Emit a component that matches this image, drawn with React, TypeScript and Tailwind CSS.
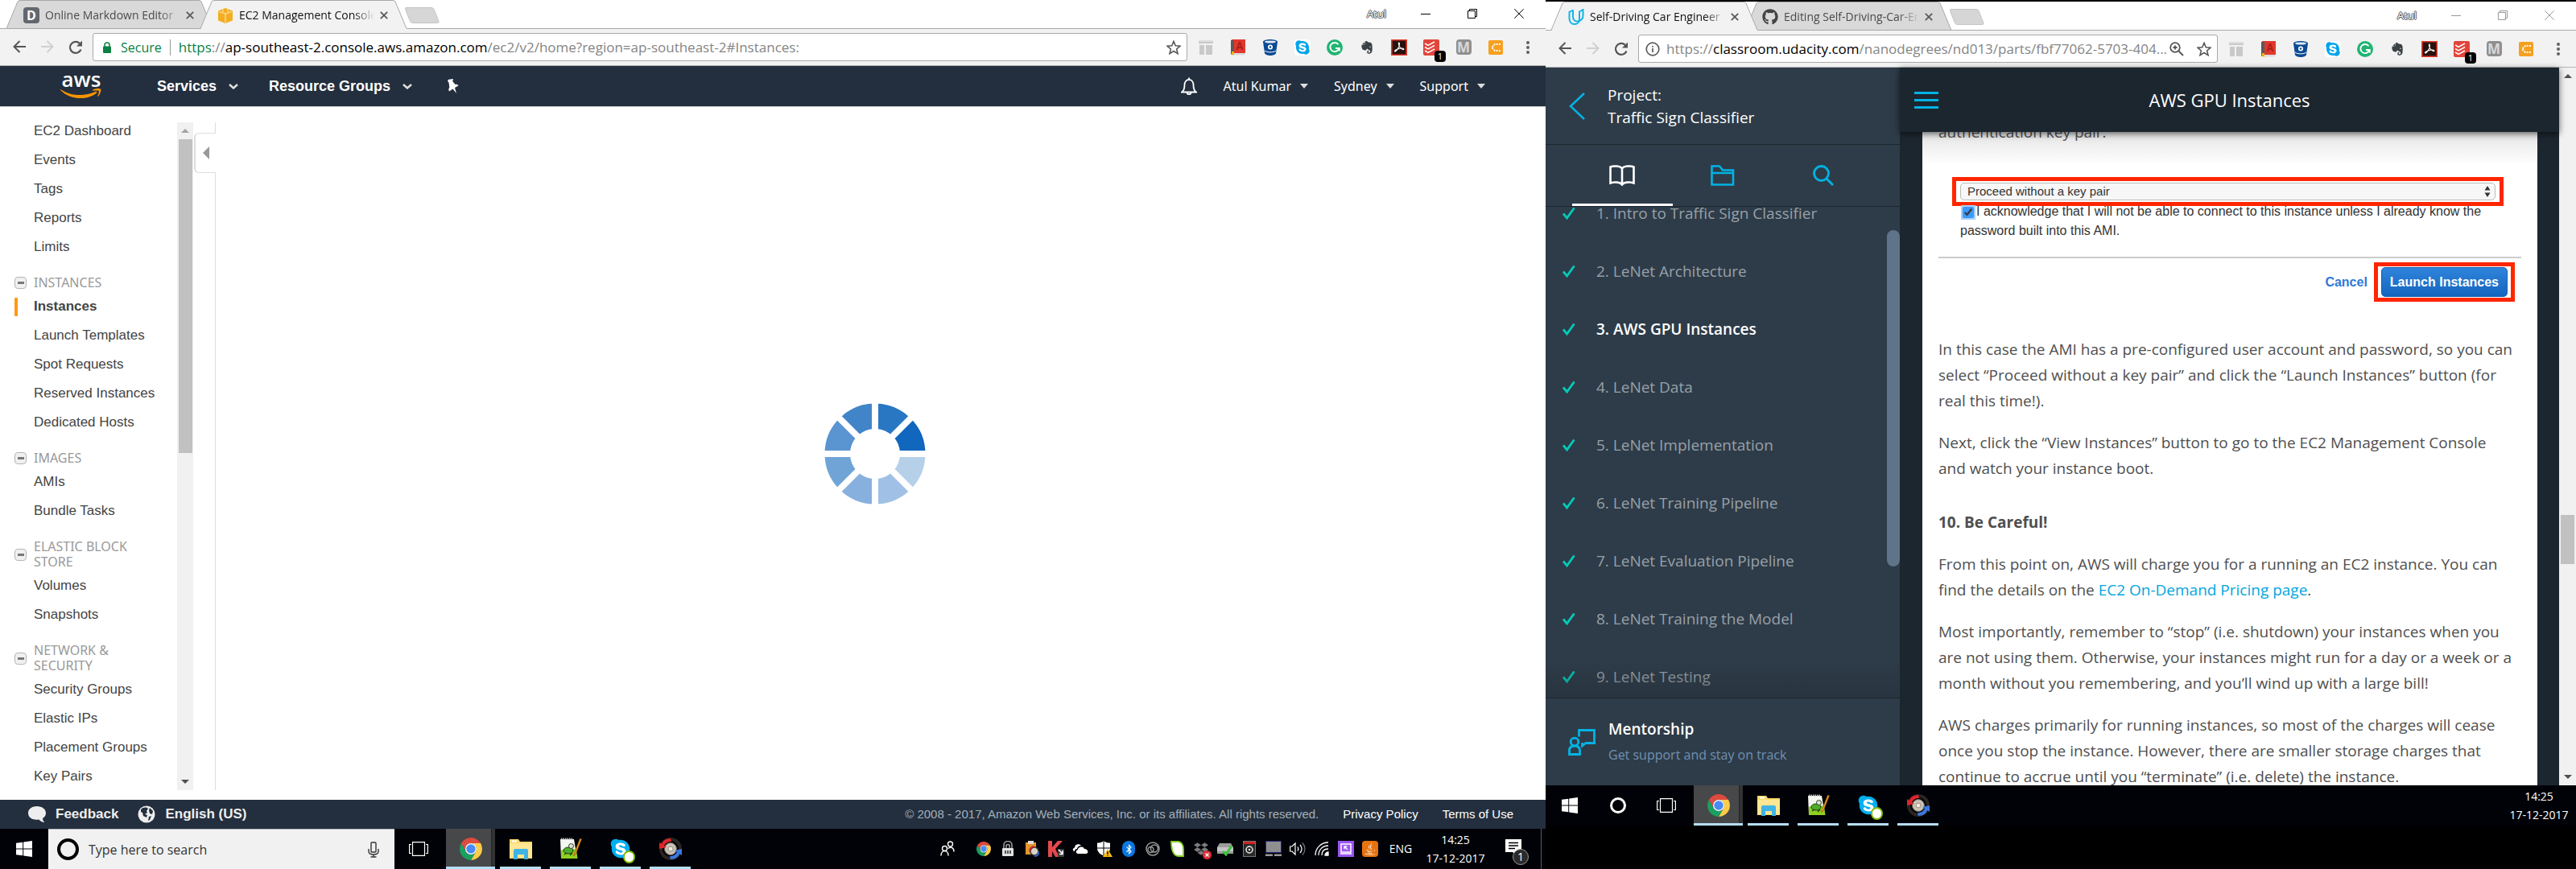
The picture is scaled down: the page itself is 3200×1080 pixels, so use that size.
import React from "react";
import { FaGithub, FaEvernote, FaJava, FaDropbox, FaBluetoothB, FaSkype } from "react-icons/fa";

const UI = "font-['Open_Sans',sans-serif]";
const ARIAL = "font-['Liberation_Sans',sans-serif]";

/* ---------- shared icons ---------- */

function ChromeLogo({ className }: { className: string }) {
  const arm = "M1.61 6A12 12 0 0 1 22.39 6H12A6 6 0 0 0 6.8 15Z";
  return (
    <svg viewBox="0 0 24 24" className={className} aria-hidden="true">
      <path d={arm} fill="#dd4b3e" />
      <path d={arm} fill="#fdcd48" transform="rotate(120 12 12)" />
      <path d={arm} fill="#1aa05f" transform="rotate(240 12 12)" />
      <circle cx="12" cy="12" r="6" fill="#fff" />
      <circle cx="12" cy="12" r="4.9" fill="#4a8af4" />
    </svg>
  );
}

function WindowsLogo() {
  return (
    <svg viewBox="0 0 20 20" className="size-5" fill="#fff" aria-hidden="true">
      <path d="M0 2.8 8.2 1.7V9.5H0ZM9.2 1.5 20 0V9.5H9.2ZM0 10.5H8.2V18.3L0 17.2ZM9.2 10.5H20V20L9.2 18.5Z" />
    </svg>
  );
}

function TaskViewIcon() {
  return (
    <svg viewBox="0 0 24 18" className="h-[18px] w-6" fill="none" stroke="#fff" strokeWidth="1.2" aria-hidden="true">
      <path d="M4.5.6h15v16.8h-15zM3 3.5H.6v11H3M21 3.5h2.4v11H21" />
    </svg>
  );
}

function ExplorerIcon({ className = "size-7" }: { className?: string }) {
  return (
    <svg viewBox="0 0 28 28" className={className} aria-hidden="true">
      <path d="M0 2h11l2 3h15v21H0Z" fill="#fbd968" />
      <path d="M0 7h28v18H0Z" fill="#ffe694" />
      <path d="M3 3.5h6v2H3Z" fill="#fff" />
      <path d="M5 16a2 2 0 0 1 2-2h14a2 2 0 0 1 2 2v11h-5v-6h-8v6H5Z" fill="#3eb3e6" />
    </svg>
  );
}

function NotepadIcon() {
  return (
    <svg viewBox="0 0 28 28" className="size-7" aria-hidden="true">
      <path d="M1 2h17l4 24H2Z" fill="#f4f6f0" />
      <path d="M2 16c6-3 12-3 19-1l1.500 11H2Z" fill="#8fd021" />
      <path d="M2 1.500h15" stroke="#bbb" strokeWidth="2" strokeDasharray="1.500 1" />
      <ellipse cx="11" cy="16" rx="6" ry="4" fill="#4fae2c" stroke="#1d3b12" />
      <circle cx="14.500" cy="10.500" r="3" fill="#d7e8c4" stroke="#333" />
      <path d="m6 21 3-2m4 3 3-3" stroke="#1d3b12" strokeWidth="1.500" />
      <path d="m18 20 7.500-19 2 1L20 21l-2.500 2Z" fill="#e8961e" stroke="#7a4a10" strokeWidth=".5" />
    </svg>
  );
}

function SkypeTask() {
  return (
    <span className="relative block size-7">
      <span className="absolute inset-1 rounded-full bg-white" />
      <FaSkype className="relative size-7 text-[#00aff0]" />
      <span className="absolute -bottom-1 -right-1 h-4 w-[15px] rounded-full border-2 border-[#7fba00] bg-white" />
    </span>
  );
}

function GearArrows() {
  return (
    <svg viewBox="0 0 28 28" className="size-7" aria-hidden="true">
      <circle cx="14" cy="14" r="12" fill="none" stroke="#2a2522" strokeWidth="4" />
      <circle cx="14" cy="14" r="7.500" fill="#c9c2b4" stroke="#6c665c" />
      <circle cx="14" cy="14" r="3" fill="#f0ebdf" stroke="#9a9283" />
      <path d="M14 1C8 1 4 4 3 8L0 6v8l9-2-3-2c2-3 4-5 9-5Z" fill="#e0242b" />
      <path d="M14 27c6 0 10-3 11-7l3 2v-8l-9 2 3 2c-2 3-4 5-9 5Z" fill="#3b78e0" />
    </svg>
  );
}

/* ---------- browser frame ---------- */

const CloseX = () => (
  <svg viewBox="0 0 10 10" className="size-[10px]" stroke="#5a5a5a" strokeWidth="1.800" aria-hidden="true">
    <path d="m.8.8 8.400 8.400M9.200.8.800 9.200" />
  </svg>
);

function Tab({ active, icon, title, first }: { active?: boolean; icon: React.ReactNode; title: string; first?: boolean }) {
  return (
    <div className={`relative h-9 w-[257px] shrink-0 ${first ? "" : "-ml-4"} ${active ? "z-10" : ""}`}>
      <svg viewBox="0 0 257 36" preserveAspectRatio="none" className="absolute inset-0 size-full" aria-hidden="true">
        <path d="M0 35.500 14 2q1-1.500 3-1.500H239q2 0 3 1.500l14 33.500" fill={active ? "#f2f2f2" : "#d9d9d9"} stroke="#a8a8a8" />
        <path d="M1 35.500H256" stroke={active ? "#f2f2f2" : "#a8a8a8"} />
      </svg>
      <div className="relative flex h-full items-center pl-[21px] pt-[2px]">
        <button className="flex min-w-0 items-center gap-[7px]">
          <span className="flex size-5 shrink-0 items-center justify-center">{icon}</span>
          <span
            className={`w-[168px] overflow-hidden whitespace-nowrap text-left text-sm [mask-image:linear-gradient(to_right,#000_85%,transparent)] ${active ? "text-[#111]" : "text-[#4a4a4a]"}`}
          >
            {title}
          </span>
        </button>
        <button aria-label="Close tab" className="ml-[7px]">
          <CloseX />
        </button>
      </div>
    </div>
  );
}

function WindowControls({ faded }: { faded?: boolean }) {
  return (
    <div className={`ml-auto flex h-[34px] items-center pr-1 ${faded ? "text-[#999]" : "text-black"}`}>
      <button className="mr-5 text-[13px] leading-4 text-white [text-shadow:1px_0_0_#555,-1px_0_0_#555,0_1px_0_#555,0_-1px_0_#555]">Atul</button>
      <button aria-label="Minimize" className="flex w-[58px] justify-center">
        <span className="h-px w-3 bg-current" />
      </button>
      <button aria-label="Restore" className="flex w-[58px] justify-center">
        <svg viewBox="0 0 12 12" className="size-3" fill="none" stroke="currentColor">
          <path d="M.5 2.500h9v9h-9zM2.500 2.500v-2h9v9h-2" />
        </svg>
      </button>
      <button aria-label="Close" className="flex w-[58px] justify-center">
        <svg viewBox="0 0 12 12" className="size-3" stroke="currentColor">
          <path d="m.3.3 11.400 11.400M11.700.3.3 11.700" />
        </svg>
      </button>
    </div>
  );
}

function Extensions() {
  const items: [string, React.ReactNode][] = [
    [
      "Page layout",
      <svg viewBox="0 0 18 18" className="size-[18px]" fill="#c9c9c9">
        <path d="M0 0h18v4H0zM1 6h6v12H1zM9 6h8v12H9z" />
        <path d="M0 0h18v2H0z" fill="#dedede" />
      </svg>,
    ],
    [
      "Dictionary",
      <svg viewBox="0 0 18 20" className="h-5 w-[18px]">
        <path d="M1 0h17v17H4l-3 2Z" fill="#e2372c" />
        <path d="M0 1h4v18H1l-1-1Z" fill="#5a5a5a" />
        <path d="M3 17h14v2.500H3Z" fill="#dcdcdc" />
        <path d="m7.500 13 3-9h1l3 9M8.500 10h5" stroke="#a8211a" strokeWidth="1.800" fill="none" />
        <path d="M1 15h3v5l-1.500-1.500L1 20Z" fill="#f3b516" />
      </svg>,
    ],
    [
      "Bitbucket",
      <svg viewBox="0 0 18 20" className="h-5 w-[18px]">
        <path d="M0 3c0-4 18-4 18 0l-2 14c-1 4-13 4-14 0Z" fill="#0b4a94" />
        <ellipse cx="9" cy="3" rx="7" ry="1.600" fill="#dfe9f5" />
        <circle cx="9" cy="9.500" r="3" fill="#fff" />
        <circle cx="9" cy="9.500" r="1.300" fill="#0b4a94" />
        <path d="M2 14c3 2.500 11 2.500 14 0" stroke="#fff" fill="none" />
      </svg>,
    ],
    ["Skype", <FaSkype className="size-5 rounded bg-white text-[#00a4ea]" />],
    [
      "Grammarly",
      <svg viewBox="0 0 20 20" className="size-5">
        <circle cx="10" cy="10" r="10" fill="#1fb573" />
        <path d="M14.500 6.200A5.600 5.600 0 1 0 15.400 11H11M12.800 11h3v3.500" stroke="#fff" strokeWidth="1.900" fill="none" />
      </svg>,
    ],
    ["Evernote", <FaEvernote className="size-[18px] text-[#3b4245]" />],
    [
      "Acrobat",
      <svg viewBox="0 0 20 20" className="size-5">
        <path d="M.8.8h18.400v18.400H.8z" fill="#27120f" stroke="#e8392b" strokeWidth="1.600" />
        <path d="M9.500 4c2 0 .5 5-1 7.500S4.500 16 4.500 14.500s6-3.500 9-3.500 3 2 1 1.500-5-4-5-6.500c0-1 0-2 0-2Z" fill="none" stroke="#f5f5f5" strokeWidth="1.200" />
      </svg>,
    ],
    [
      "Todoist",
      <span className="relative block">
        <svg viewBox="0 0 20 20" className="size-5">
          <rect width="20" height="20" rx="2" fill="#e2453c" />
          <path d="m2 5 4 2.500L14 3M2 9.500 6 12l8-4.500M2 14l4 2.500 8-4.500" stroke="#fff" strokeWidth="1.500" fill="none" />
        </svg>
        <span className="absolute -bottom-2 -right-2 flex h-[14px] w-[14px] items-center justify-center rounded-sm bg-black text-[11px] leading-none text-white">1</span>
      </span>,
    ],
    [
      "Mendeley",
      <span className="flex size-[19px] items-center justify-center rounded-sm bg-[#8f8f8f] text-[17px] font-bold leading-none text-[#d9d9d9]">M</span>,
    ],
    [
      "Cloud",
      <svg viewBox="0 0 18 18" className="size-[18px]">
        <rect width="18" height="18" rx="2" fill="#f7a01f" />
        <path d="M15 5H8L4 9l4 4h7" stroke="#fff" strokeWidth="2" strokeDasharray="2 1.300" fill="none" />
      </svg>,
    ],
  ];
  return (
    <div className="ml-[3px] flex shrink-0 items-center pr-[2px]">
      {items.map(([label, icon]) => (
        <button key={label} aria-label={label} className="flex w-10 justify-center">
          {icon}
        </button>
      ))}
      <button aria-label="Menu" className="flex w-10 justify-center">
        <svg viewBox="0 0 4 20" className="h-5 w-1" fill="#5f6062">
          <circle cx="2" cy="4" r="2" />
          <circle cx="2" cy="10" r="2" />
          <circle cx="2" cy="16" r="2" />
        </svg>
      </button>
    </div>
  );
}

function Toolbar({ children }: { children: React.ReactNode }) {
  return (
    <div className="flex h-[46px] shrink-0 items-center border-b border-[#b6b6b6] bg-[#f2f2f2]">
      <div className="flex shrink-0 pl-[6px]">
        <button aria-label="Back" className="flex w-[35px] justify-center">
          <svg viewBox="0 0 16 16" className="size-4" fill="none" stroke="#555" strokeWidth="2">
            <path d="M16 8H1.500M8.500 1 1.500 8l7 7" />
          </svg>
        </button>
        <button aria-label="Forward" className="flex w-[35px] justify-center">
          <svg viewBox="0 0 16 16" className="size-4" fill="none" stroke="#d0d0d0" strokeWidth="2">
            <path d="M0 8h14.500M7.500 1l7 7-7 7" />
          </svg>
        </button>
        <button aria-label="Reload" className="flex w-[35px] justify-center">
          <svg viewBox="0 0 18 18" className="size-[18px]" fill="none" stroke="#555" strokeWidth="2.200">
            <path d="M15.500 11.500A7 7 0 1 1 14 4" />
            <path d="M17 .5v7h-7Z" fill="#555" stroke="none" />
          </svg>
        </button>
      </div>
      <div className="ml-1 flex h-[35px] min-w-0 flex-1 items-center rounded-[3px] border border-[#a9a9a9] bg-white">{children}</div>
      <Extensions />
    </div>
  );
}

function Star() {
  return (
    <button aria-label="Bookmark" className="mr-[7px] shrink-0">
      <svg viewBox="0 0 20 20" className="size-[18px]" fill="none" stroke="#555" strokeWidth="1.700">
        <path d="m10 1.500 2.500 6 6.500.5-5 4.200 1.600 6.300L10 15l-5.600 3.500L6 12.200 1 8l6.500-.5Z" />
      </svg>
    </button>
  );
}

function NewTab() {
  return (
    <button aria-label="New tab" className="-ml-[3px] mt-[9px] h-5">
      <svg viewBox="0 0 43 20" className="h-5 w-[43px]">
        <path d="M2 .5h31q2 0 3 2l6 15q.5 2-1.500 2h-31q-2 0-3-2l-6-15Q0 .5 2 .5Z" fill="#d6d6d6" stroke="#c4c4c4" />
      </svg>
    </button>
  );
}

/* ---------- taskbar ---------- */

const taskCell = "flex h-full w-[51px] items-center justify-center border-b-[3px] border-[#b5dffa] pt-[3px]";

function TaskApps() {
  return (
    <div className="flex h-full shrink-0 items-stretch">
      <button aria-label="Task view" className="flex w-[60px] items-center justify-center">
        <TaskViewIcon />
      </button>
      <div className="ml-1 flex gap-[11px]">
        <button aria-label="Chrome" className="-mr-[5px] flex w-[61px] items-center justify-center border-b-[3px] border-[#b5dffa] bg-[linear-gradient(to_right,#47484a_56px,#222_56px,#333_58px)] pt-[3px]">
          <ChromeLogo className="size-7" />
        </button>
        <button aria-label="File Explorer" className={taskCell}>
          <ExplorerIcon />
        </button>
        <button aria-label="Notepad++" className={taskCell}>
          <NotepadIcon />
        </button>
        <button aria-label="Skype" className={taskCell}>
          <SkypeTask />
        </button>
        <button aria-label="Sync" className={taskCell}>
          <GearArrows />
        </button>
      </div>
    </div>
  );
}

function Clock() {
  return (
    <div className="flex w-[90px] flex-col items-center text-sm leading-[23px] text-white">
      <span>14:25</span>
      <span>17-12-2017</span>
    </div>
  );
}

function Tray() {
  const items: [string, React.ReactNode][] = [
    ["Chrome", <ChromeLogo className="size-[18px]" />],
    [
      "Hotspot",
      <svg viewBox="0 0 16 20" className="h-5 w-4">
        <path d="M3 9V5c0-6 10-6 10 0v4M6 9V6c0-2 4-2 4 0v3" fill="none" stroke="#9a9a9a" strokeWidth="1.600" />
        <rect x="1" y="9" width="14" height="10" rx="1" fill="#e3e3e3" />
        <path d="M4 12h2v4H4zM7 12h2v4H7zM10 12h2v4h-2z" fill="#555" />
      </svg>,
    ],
    [
      "Clipboard",
      <svg viewBox="0 0 18 20" className="h-5 w-[18px]">
        <path d="M1 2h13v15H1z" fill="#e2962e" />
        <path d="M4 0h7v4H4z" fill="#ddd" />
        <circle cx="12" cy="13" r="5" fill="#d8d2c8" stroke="#333" strokeWidth="1.500" />
        <path d="M6 13c0-4 3-6 6-6" stroke="#d22" strokeWidth="2" fill="none" />
        <path d="M18 13c0 4-3 6-6 6" stroke="#36c" strokeWidth="2" fill="none" />
      </svg>,
    ],
    [
      "Antivirus",
      <svg viewBox="0 0 20 20" className="size-5">
        <path d="M0 0h5v8l7-8h6L9 10l5 10H9l-4-7v7H0Z" fill="#e5484c" />
        <path d="M12 10h8v10h-8z" fill="#3d3d3d" />
        <path d="m13 11 5 5m0-4v4.500h-4" stroke="#fff" strokeWidth="1.500" fill="none" />
      </svg>,
    ],
    [
      "OneDrive",
      <svg viewBox="0 0 20 14" className="h-[14px] w-5" fill="#fff">
        <path d="M3 10C0 10 0 6 3 5.500 3 1 9 0 11 3c-3 0-5 2-5 4-2 0-3 1-3 3Z" />
        <path d="M8 13c-4 0-4-4-1-5 0-4 7-5 8-1 5 0 6 6 2 6Z" />
      </svg>,
    ],
    [
      "Defender",
      <svg viewBox="0 0 20 20" className="size-5">
        <path d="M9 0c2 2 5 2.500 8 2.500V9c0 5-4 8-8 9.500C5 17 1 14 1 9V2.500C4 2.500 7 2 9 0Z" fill="#fff" />
        <path d="M9 0v18M1 9h16" stroke="#000" />
        <path d="m14 10 6 10H8Z" fill="#fbbc14" />
        <path d="M14 13v4m0 1v1" stroke="#000" strokeWidth="1.300" />
      </svg>,
    ],
    [
      "Bluetooth",
      <span className="flex h-5 w-4 items-center justify-center rounded-full bg-[#0a78e0]">
        <FaBluetoothB className="size-[13px] text-white" />
      </span>,
    ],
    [
      "Creative Cloud",
      <svg viewBox="0 0 18 18" className="size-[18px]" fill="none" stroke="#9d9d9d" strokeWidth="1.400">
        <circle cx="9" cy="9" r="8" />
        <circle cx="6.500" cy="10" r="3.500" />
        <circle cx="11" cy="8.500" r="4.500" />
      </svg>,
    ],
    [
      "Evernote helper",
      <svg viewBox="0 0 18 20" className="h-5 w-[18px]">
        <path d="M2 1h9c5 1 6 6 6 10v8h-6C5 19 2 12 2 1Z" fill="#fff" stroke="#7fd023" strokeWidth="1.800" />
      </svg>,
    ],
    [
      "Dropbox",
      <span className="relative block">
        <FaDropbox className="size-[18px] text-[#7b7b7b]" />
        <svg viewBox="0 0 11 11" className="absolute -bottom-1 -right-1 size-[11px]">
          <circle cx="5.500" cy="5.500" r="5.500" fill="#dd2f3a" />
          <path d="m3.500 3.500 4 4m0-4-4 4" stroke="#fff" strokeWidth="1.300" />
        </svg>
      </span>,
    ],
    [
      "Safely remove",
      <svg viewBox="0 0 20 18" className="h-[18px] w-5">
        <path d="M3 2h14l3 5v8H0V7Z" fill="#9c9c9c" />
        <path d="M0 7h20v5H0Z" fill="#c4c4c4" />
        <path d="m7 12 4 4 7-11" stroke="#3cc23c" strokeWidth="3" fill="none" />
      </svg>,
    ],
    [
      "Disk",
      <svg viewBox="0 0 16 20" className="h-5 w-4">
        <rect x=".5" y=".5" width="15" height="19" fill="#2a2a2a" stroke="#777" />
        <path d="M1 1h14v3H1z" fill="#c22" />
        <circle cx="8" cy="11" r="4" fill="none" stroke="#eee" strokeWidth="1.500" />
        <circle cx="8" cy="11" r="1.200" fill="#eee" />
      </svg>,
    ],
    [
      "Touchpad",
      <svg viewBox="0 0 20 20" className="size-5">
        <rect x=".5" y=".5" width="19" height="14" fill="#8f8f8f" stroke="#26277a" />
        <path d="M0 16.500h9V19H0zM11 16.500h9V19h-9z" fill="#9a9a9a" />
      </svg>,
    ],
    [
      "Volume",
      <svg viewBox="0 0 20 18" className="h-[18px] w-5" fill="none" stroke="#fff" strokeWidth="1.200">
        <path d="M.6 6H3l4-4v14l-4-4H.6Z" />
        <path d="M10 6.500c1 1.500 1 3.500 0 5M13 4c2.500 3 2.500 7 0 10" />
        <path d="M16 1.500c4 4.500 4 10.500 0 15" stroke="#777" />
      </svg>,
    ],
    [
      "Network",
      <svg viewBox="0 0 18 18" className="size-[18px]" fill="none" stroke="#fff" strokeWidth="1.300">
        <path d="M1 17C1 8 8 1 17 1M5 17c0-7 5-12 12-12M9 17c0-5 3-8 8-8" />
        <path d="M13 17c0-2 2-4 4-4v4Z" fill="#fff" />
      </svg>,
    ],
    [
      "Remote",
      <svg viewBox="0 0 20 20" className="size-5">
        <rect width="20" height="20" fill="#9a55f2" />
        <path d="M4 4h12v10H4zM3 16h14" fill="none" stroke="#fff" strokeWidth="1.500" />
        <path d="m8 7 4 4M8 10.500V7h3.500" stroke="#fff" strokeWidth="1.300" fill="none" />
      </svg>,
    ],
    [
      "Java",
      <span className="flex size-5 items-center justify-center rounded-sm bg-[#e5730f]">
        <FaJava className="size-4 text-white" />
      </span>,
    ],
  ];
  return (
    <div className="ml-auto flex h-full shrink-0 items-center">
      <button aria-label="People" className="mr-[15px] flex w-[30px] justify-center">
        <svg viewBox="0 0 18 20" className="h-5 w-[18px]" fill="none" stroke="#fff" strokeWidth="1.400">
          <circle cx="12.500" cy="4" r="3" />
          <circle cx="5.500" cy="9.500" r="3" />
          <path d="M1 18.500c0-8 9-8 9 0M9.500 9.500c4-2.500 7.500-1 7.500 4" />
        </svg>
      </button>
      {items.map(([label, icon]) => (
        <button key={label} aria-label={label} className="flex w-[30px] justify-center">
          {icon}
        </button>
      ))}
      <button className="w-[46px] text-center text-sm text-white">ENG</button>
      <Clock />
      <button aria-label="Notifications" className="relative flex h-full w-[61px] items-center justify-center">
        <svg viewBox="0 0 20 20" className="mb-1 mr-2 size-5">
          <path d="M0 0h20v16h-6v4l-5-4H0Z" fill="#fff" />
          <path d="M4 4.500h12M4 8h12M4 11.500h8" stroke="#000" strokeWidth="1.500" />
        </svg>
        <span className="absolute bottom-[5px] right-[15px] flex size-5 items-center justify-center rounded-full border border-[#999] bg-[#2b2b2b] text-sm leading-none text-white">1</span>
      </button>
      <div className="h-full w-[6px] border-l border-[#5a5a5a]" />
    </div>
  );
}

/* ---------- AWS console ---------- */

const sections: { title?: string; items: string[] }[] = [
  { items: ["EC2 Dashboard", "Events", "Tags", "Reports", "Limits"] },
  { title: "INSTANCES", items: ["Instances", "Launch Templates", "Spot Requests", "Reserved Instances", "Dedicated Hosts"] },
  { title: "IMAGES", items: ["AMIs", "Bundle Tasks"] },
  { title: "ELASTIC BLOCK STORE", items: ["Volumes", "Snapshots"] },
  { title: "NETWORK & SECURITY", items: ["Security Groups", "Elastic IPs", "Placement Groups", "Key Pairs"] },
];

function Ec2Sidebar() {
  return (
    <aside className="flex min-h-0 shrink-0 pb-3">
      <nav aria-label="EC2" className={`w-[220px] overflow-hidden pt-3 text-[17px] text-[#444] ${ARIAL}`}>
        {sections.map((s, i) => (
          <section key={i}>
            {s.title && (
              <h2 className="mb-[2px] mt-[17px] flex items-center pl-[18px] pr-10 font-['Noto_Sans',sans-serif] text-base leading-[19px] text-[#999]">
                <button aria-label={`Collapse ${s.title}`} className="mr-[9px] flex size-[15px] shrink-0 items-center justify-center rounded-sm border border-[#b5b5b5] bg-[#f0f0f0]">
                  <span className="h-[3px] w-2 bg-[#777]" />
                </button>
                <span>{s.title}</span>
              </h2>
            )}
            <ul>
              {s.items.map((it) => (
                <li key={it} className="flex h-9 items-center pl-[18px]">
                  <span className={`mr-5 h-[23px] w-1 rounded-[1px] ${it === "Instances" ? "bg-[#ff9914]" : ""}`} />
                  <a href="#" className={it === "Instances" ? "font-bold" : ""}>
                    {it}
                  </a>
                </li>
              ))}
            </ul>
          </section>
        ))}
      </nav>
      <div className="mt-[19px] flex w-5 flex-col items-center bg-[#f1f1f1]">
        <div className="flex h-[21px] items-center">
          <span className="border-x-[5px] border-b-[5px] border-x-transparent border-b-[#a3a3a3]" />
        </div>
        <div className="h-[47%] w-[17px] bg-[#c1c1c1]" />
        <div className="mt-auto flex h-[21px] items-center">
          <span className="border-x-[5px] border-t-[5px] border-x-transparent border-t-[#505050]" />
        </div>
      </div>
      <div className="mt-[19px] flex w-7 flex-col">
        <div className="h-[13px] border-r border-[#ddd]" />
        <button aria-label="Collapse sidebar" className="ml-px flex h-[50px] items-center rounded-l-md border-y border-l-2 border-[#ddd] pl-[9px]">
          <span className="border-y-[8px] border-r-[8px] border-y-transparent border-r-[#999]" />
        </button>
        <div className="flex-1 border-r border-[#ddd]" />
      </div>
    </aside>
  );
}

function Spinner() {
  const colors = ["#2977c3", "#1166bd", "#b6d0ea", "#a0c1e5", "#88b0de", "#70a4d7", "#5a94d1", "#4184c8"];
  return (
    <svg role="img" aria-label="Loading" viewBox="-63 -63 126 126" className="size-[126px]">
      {colors.map((c, i) => (
        <path key={c} d="M0-62.500A62.500 62.500 0 0 1 44.190-44.190L21.920-21.920A31 31 0 0 0 0-31Z" fill={c} transform={`rotate(${i * 45})`} />
      ))}
      <path d="M0-63V63M-63 0H63M-45-45 45 45M-45 45 45-45" stroke="#fff" strokeWidth="8" />
    </svg>
  );
}

const Chevron = () => (
  <svg viewBox="0 0 12 7" className="h-[7px] w-3" fill="none" stroke="#ddd" strokeWidth="2.500" aria-hidden="true">
    <path d="m1 1 5 4.500L11 1" />
  </svg>
);
const Caret = () => <span className="border-x-[5px] border-t-[6px] border-x-transparent border-t-[#ddd]" />;

function AwsHeader() {
  return (
    <header className={`flex h-[50px] shrink-0 items-center bg-[#232f3e] text-white ${ARIAL}`}>
      <a href="#" aria-label="AWS home" className="ml-[75px] flex w-[52px] flex-col items-center">
        <span className="h-[18px] font-['Open_Sans',sans-serif] text-[26px] font-semibold leading-[13px]">aws</span>
        <svg viewBox="0 0 52 13" className="h-[13px] w-[52px]" aria-hidden="true">
          <path d="M.5 1.200C13 9.500 30 10 43.500 4c1.500-.7 2.500.6 1.300 1.700C34 14.500 13 15 .3 2.300c-.7-.7-.4-1.500.2-1.100Z" fill="#f79400" />
          <path d="M40.500 1.600c3-1.800 8.500-2 9.600-.8 1 1.400-.6 6.800-3.200 9-.5.4-.9.100-.7-.5.900-2 2.200-5.300 1.600-6.200-.7-.8-4.500-.6-6.800-.4-.8.100-1.200-.7-.5-1.100Z" fill="#f79400" />
        </svg>
      </a>
      <button className="ml-[68px] flex items-center gap-[15px] text-lg font-bold">
        Services <Chevron />
      </button>
      <button className="ml-[38px] flex items-center gap-[15px] text-lg font-bold">
        Resource Groups <Chevron />
      </button>
      <button aria-label="Pin" className="ml-[42px]">
        <svg viewBox="0 0 16 18" className="h-[18px] w-4" fill="#fff">
          <path d="m2.500 1 6-1 .5 1.500-1 1.200 3.500 4.300c1.500-.6 3 0 4 1.500l-4.500 2.500L13 18l-4.500-5.500L4 15.500c-1-1.500-.7-3.500.3-5L3.500 4.500 2.300 3.500Z" />
        </svg>
      </button>
      <div className="ml-auto flex items-center pr-[75px] font-['Noto_Sans',sans-serif] text-base">
        <button aria-label="Alerts" className="mr-[33px]">
          <svg viewBox="0 0 20 22" className="h-[22px] w-5" fill="none" stroke="#fff" strokeWidth="1.800">
            <path d="M1 18.500c3-2 3.500-4.500 3.500-9C4.500 5.500 7 3 10 3s5.500 2.500 5.500 6.500c0 4.500.5 7 3.500 9Z" />
            <path d="M10 3V.5M7.500 19c0 3 5 3 5 0" />
          </svg>
        </button>
        <button className="mr-8 flex items-center gap-[11px]">
          Atul Kumar <Caret />
        </button>
        <button className="mr-8 flex items-center gap-[11px]">
          Sydney <Caret />
        </button>
        <button className="flex items-center gap-[11px]">
          Support <Caret />
        </button>
      </div>
    </header>
  );
}

function AwsFooter() {
  return (
    <footer className={`flex h-9 shrink-0 items-center bg-[#232f3e] text-[15px] text-white ${ARIAL}`}>
      <a href="#" className="ml-[35px] flex items-center gap-3 text-[17px] font-bold text-[#eee]">
        <svg viewBox="0 0 22 20" className="h-5 w-[22px]" fill="#eee" aria-hidden="true">
          <path d="M11 0c6 0 11 3.500 11 8.500 0 3-1.500 5-4 6.500 0 2 1 4 2.500 5-3 0-5.500-1.500-7-3.500C5 17.500 0 14 0 8.500S5 0 11 0Z" />
        </svg>
        Feedback
      </a>
      <a href="#" className="ml-6 flex items-center gap-3 text-[17px] font-bold text-[#eee]">
        <svg viewBox="0 0 22 22" className="size-[22px]" aria-hidden="true">
          <circle cx="11" cy="11" r="10.500" fill="#eee" />
          <path d="M4 5c3-3 7-3 9-1l-2 3 1 2-3 2 3 1-1 3-4-2-1-4-2-1Z" fill="#232f3e" />
          <path d="m15 3 4 4-1 4-3-1-1-4ZM14 14l3-1-2 5-2 1Z" fill="#232f3e" />
        </svg>
        English (US)
      </a>
      <span className="ml-auto text-[#a3afb9]">© 2008 - 2017, Amazon Web Services, Inc. or its affiliates. All rights reserved.</span>
      <a href="#" className="ml-[30px]">
        Privacy Policy
      </a>
      <a href="#" className="ml-[30px] mr-10">
        Terms of Use
      </a>
    </footer>
  );
}

function LeftScreen() {
  return (
    <div className="flex min-h-0 min-w-0 flex-col bg-white">
      <div className="relative flex h-9 shrink-0 bg-[linear-gradient(#fff_35px,#a8a8a8_35px)] pl-2">
        <Tab
          first
          title="Online Markdown Editor"
          icon={<span className="flex size-5 items-center justify-center rounded bg-[#63676f] text-base font-bold leading-none text-white">D</span>}
        />
        <Tab
          active
          title="EC2 Management Console"
          icon={
            <svg viewBox="0 0 18 19" className="h-[19px] w-[18px]">
              <path d="M0 3.500 9 0l9 3.500v12L9 19l-9-3.500Z" fill="#f3ad22" />
              <path d="m1 4.500 8 2.500 8-2.500M9 7v11M6 2v3M12 2v3" stroke="#fde3a6" fill="none" strokeWidth="1.200" />
            </svg>
          }
        />
        <NewTab />
        <WindowControls />
      </div>
      <Toolbar>
        <svg viewBox="0 0 10 14" className="ml-3 h-[14px] w-[10px] shrink-0" aria-hidden="true">
          <path d="M2 6V4a3 3 0 0 1 6 0v2" stroke="#0b8043" strokeWidth="1.500" fill="none" />
          <rect y="5.500" width="10" height="8.500" rx="1" fill="#0b8043" />
        </svg>
        <span className="ml-3 text-base text-[#0b8043]">Secure</span>
        <span className="mx-[10px] h-5 w-px bg-[#999]" />
        <div role="textbox" aria-label="Address" className="min-w-0 flex-1 truncate text-[17px] leading-6 text-[#858585]">
          <span className="text-[#0b8043]">https</span>://<span className="text-black">ap-southeast-2.console.aws.amazon.com</span>/ec2/v2/home?region=ap-southeast-2#Instances:
        </div>
        <Star />
      </Toolbar>
      <AwsHeader />
      <div className="flex min-h-0 flex-1 border-t border-[#ccc]">
        <Ec2Sidebar />
        <main className="flex flex-1 items-center justify-center pr-[14px]">
          <Spinner />
        </main>
      </div>
      <AwsFooter />
      <div className="flex h-[50px] shrink-0 bg-[#010207]">
        <button aria-label="Start" className="flex w-[60px] items-center justify-center">
          <WindowsLogo />
        </button>
        <label className="flex w-[430px] items-center border-t border-[#b5b5b5] bg-[#f1f1f1] pl-[11px] pr-[19px]">
          <span className="size-[27px] shrink-0 rounded-full border-4 border-black" />
          <input type="text" aria-label="Search" placeholder="Type here to search" className="ml-3 min-w-0 flex-1 bg-transparent text-base outline-none placeholder:text-[#333]" />
          <svg viewBox="0 0 14 20" className="h-5 w-[14px]" fill="none" stroke="#333" strokeWidth="1.400" aria-hidden="true">
            <rect x="4" y="1" width="6" height="12" rx="1" />
            <path d="M1 9v3q0 4 6 4t6-4V9M7 16v3M3.500 19h7" />
          </svg>
        </label>
        <TaskApps />
        <Tray />
      </div>
    </div>
  );
}

/* ---------- Udacity classroom ---------- */

const lessons = [
  "1. Intro to Traffic Sign Classifier",
  "2. LeNet Architecture",
  "3. AWS GPU Instances",
  "4. LeNet Data",
  "5. LeNet Implementation",
  "6. LeNet Training Pipeline",
  "7. LeNet Evaluation Pipeline",
  "8. LeNet Training the Model",
  "9. LeNet Testing",
];

function LessonPanel() {
  return (
    <aside className="flex min-h-0 w-[440px] shrink-0 flex-col bg-[#2e3c49]">
      <div className="flex h-24 shrink-0 items-center border-b border-[#1b252e] pl-[29px]">
        <button aria-label="Back">
          <svg viewBox="0 0 20 34" className="h-[34px] w-5" fill="none" stroke="#02b3e4" strokeWidth="2.500">
            <path d="M19 1 2 17l17 16" />
          </svg>
        </button>
        <h2 className="ml-7 text-[19px] leading-7 text-white">
          Project:
          <br />
          Traffic Sign Classifier
        </h2>
      </div>
      <div role="tablist" className="flex h-[77px] shrink-0 border-b border-[#1b252e] pl-[33px] pr-[33px]">
        <button role="tab" aria-selected="true" aria-label="Lessons" className="flex flex-1 items-center justify-center border-b-[3px] border-white pt-[3px]">
          <svg viewBox="0 0 32 26" className="h-[26px] w-8" fill="none" stroke="#fff" strokeWidth="2.600">
            <path d="M16 4.500C14 1 5 .8 1.500 2.500v20C6 21 14 21 16 24.500 18 21 26 21 30.500 22.500v-20C27 .8 18 1 16 4.500Zm0 0v20" />
          </svg>
        </button>
        <button role="tab" aria-selected="false" aria-label="Resources" className="flex flex-1 items-center justify-center">
          <svg viewBox="0 0 30 26" className="h-[26px] w-[30px]" fill="none" stroke="#02b3e4" strokeWidth="2.600">
            <path d="M1.500 24.500v-23h9.500l4 5h13v18ZM1.500 10H28" />
          </svg>
        </button>
        <button role="tab" aria-selected="false" aria-label="Search" className="flex flex-1 items-center justify-center">
          <svg viewBox="0 0 26 26" className="size-[26px]" fill="none" stroke="#02b3e4" strokeWidth="2.800">
            <circle cx="10.500" cy="10.500" r="9" />
            <path d="m17 17 8 8" />
          </svg>
        </button>
      </div>
      <div className="relative min-h-0 flex-1 overflow-hidden">
        <ol className="-mt-7">
          {lessons.map((l) => (
            <li key={l} className="flex h-[72px] items-center pl-[21px]">
              <svg viewBox="0 0 16 16" className="mr-[26px] size-4" fill="none" stroke="#02ccba" strokeWidth="2.800" aria-hidden="true">
                <path d="m1 8.500 4.500 5.500L14.500 1.500" />
              </svg>
              <a href="#" className={`text-[19px] leading-7 ${l.startsWith("3") ? "font-semibold text-white" : "text-[#98a0a7]"}`}>
                {l}
              </a>
            </li>
          ))}
        </ol>
        <div className="absolute right-0 top-[29px] h-[418px] w-4 rounded-full bg-[#5f7488]" />
        <div className="absolute inset-x-0 bottom-0 h-12 bg-[linear-gradient(transparent,rgba(30,38,44,0.350))]" />
      </div>
      <a href="#" className="flex h-[109px] shrink-0 items-center border-t border-[#1b252e] pl-7">
        <svg viewBox="0 0 34 33" className="h-[33px] w-[34px]" fill="none" stroke="#02b3e4" strokeWidth="2.800" aria-hidden="true">
          <circle cx="8" cy="16" r="4.800" />
          <path d="M1.500 31.500V27q0-6 6.500-6t6.500 6v4.500Z" />
          <path d="M13.500 9.500v-8h19v16H22l-4.500 3.500v-4" />
        </svg>
        <span className="ml-4">
          <span className="block text-[19px] font-semibold leading-8 text-white">Mentorship</span>
          <span className="block text-base leading-8 text-[#7190b0]">Get support and stay on track</span>
        </span>
      </a>
    </aside>
  );
}

function KeyPairFigure() {
  return (
    <figure className={`mt-10 text-base text-[#333] ${ARIAL}`}>
      <div className="ml-[17px] mr-[22px] h-9 border-[5px] border-[#ff2600] px-[5px] py-[2px]">
        <div className="relative h-full">
          <select aria-label="Key pair" className="block h-full w-full appearance-none rounded-[5px] border border-[#bbb] bg-[#f7f7f7] px-2 text-[15px] leading-5">
            <option>Proceed without a key pair</option>
          </select>
          <svg viewBox="0 0 8 14" className="pointer-events-none absolute right-[6px] top-[4px] h-[14px] w-2" fill="#333" aria-hidden="true">
            <path d="m4 0 3.500 5.500h-7ZM4 14 .5 8.500h7Z" />
          </svg>
        </div>
      </div>
      <label className="-mt-[5px] block pl-[27px] pr-7 leading-6">
        <input type="checkbox" defaultChecked className="ml-[3px] mr-[3px] size-[14px] rounded align-[-3px] accent-[#3b99fc] ring-2 ring-[#a8cef8]" />
        I acknowledge that I will not be able to connect to this instance unless I already know the password built into this AMI.
      </label>
      <div className="mt-[20px] border-t-2 border-[#ccc]" />
      <div className="mt-[5px] flex items-center justify-end pr-2">
        <button className="mr-2 font-bold text-[#2f78d8]">Cancel</button>
        <div className="border-[5px] border-[#ff2600] px-1 py-px">
          <button className="block h-[37px] rounded-[5px] border border-[#1a5fb0] bg-linear-to-b from-[#2f84dc] to-[#1465bd] px-[10px] font-bold text-white">Launch Instances</button>
        </div>
      </div>
    </figure>
  );
}

function Article() {
  return (
    <div className="flex min-w-0 flex-1 flex-col bg-[#1c262f]">
      <header className="relative z-10 flex h-20 shrink-0 items-center bg-[#1c262f] px-[18px] shadow-[0_2px_8px_rgba(0,0,0,0.600)]">
        <button aria-label="Menu" className="flex flex-col gap-[6px]">
          <span className="h-[3px] w-[30px] bg-[#02b3e4]" />
          <span className="h-[3px] w-[30px] bg-[#02b3e4]" />
          <span className="h-[3px] w-[30px] bg-[#02b3e4]" />
        </button>
        <h1 className="flex-1 pr-[30px] text-center text-[22px] leading-7 text-white">AWS GPU Instances</h1>
      </header>
      <article className="mx-7 mr-[27px] min-h-0 flex-1 overflow-hidden bg-[linear-gradient(#e4e4e4,#fff_40px)] px-5 text-[19px] leading-8 text-[#4f4f4f] [&>p]:pr-2">
        <p className="-mt-4">authentication key pair.</p>
        <KeyPairFigure />
        <p className="mt-[43px]">
          In this case the AMI has a pre-configured user account and password, so you can select “Proceed without a key pair” and click the “Launch Instances” button (for real this time!).
        </p>
        <p className="mt-5">Next, click the “View Instances” button to go to the EC2 Management Console and watch your instance boot.</p>
        <h3 className="mt-[35px] font-bold">10. Be Careful!</h3>
        <p className="mt-5">
          From this point on, AWS will charge you for a running an EC2 instance. You can find the details on the{" "}
          <a href="#" className="text-[#02a7dc]">
            EC2 On-Demand Pricing page
          </a>
          .
        </p>
        <p className="mt-5">
          Most importantly, remember to “stop” (i.e. shutdown) your instances when you are not using them. Otherwise, your instances might run for a day or a week or a month without you
          remembering, and you’ll wind up with a large bill!
        </p>
        <p className="mt-5">
          AWS charges primarily for running instances, so most of the charges will cease once you stop the instance. However, there are smaller storage charges that continue to accrue until
          you “terminate” (i.e. delete) the instance.
        </p>
      </article>
    </div>
  );
}

function RightScreen() {
  return (
    <div className="flex min-h-0 min-w-0 flex-col border-b-[54px] border-t-2 border-black bg-white">
      <div className="relative flex h-9 shrink-0 bg-[linear-gradient(#fff_35px,#a8a8a8_35px)] pl-[7px]">
        <Tab
          first
          active
          title="Self-Driving Car Engineer"
          icon={
            <svg viewBox="0 0 20 20" className="size-5" fill="none" stroke="#12b4e6" strokeWidth="2">
              <path d="M6 1.500 1.500 4v8c0 4 2.500 7 6.500 7s6-3 6-6V6" />
              <path d="M6 1.500V10c0 4 3 6 6.500 5.500S18.500 12 18.500 9V1L14 3.500V9" />
            </svg>
          }
        />
        <Tab title="Editing Self-Driving-Car-Engineer" icon={<FaGithub className="size-5 text-[#444]" />} />
        <NewTab />
        <WindowControls faded />
      </div>
      <Toolbar>
        <svg viewBox="0 0 18 18" className="ml-2 size-[18px] shrink-0" fill="none" stroke="#5a5a5a" strokeWidth="1.700" aria-hidden="true">
          <circle cx="9" cy="9" r="7.800" />
          <path d="M9 8v5M9 5v1.700" />
        </svg>
        <div role="textbox" aria-label="Address" className="ml-2 min-w-0 flex-1 whitespace-nowrap text-[17px] leading-6 text-[#858585]">
          https://<span className="text-black">classroom.udacity.com</span>/nanodegrees/nd013/parts/fbf77062-5703-404...
        </div>
        <button aria-label="Zoom" className="mr-4 shrink-0">
          <svg viewBox="0 0 18 18" className="size-[18px]" fill="none" stroke="#555" strokeWidth="1.800">
            <circle cx="7" cy="7" r="5.800" />
            <path d="m11.500 11.500 5.500 5.500M4.500 7h5M7 4.500v5" />
          </svg>
        </button>
        <Star />
      </Toolbar>
      <div className="flex min-h-0 flex-1">
        <LessonPanel />
        <Article />
        <div className="flex w-[21px] shrink-0 flex-col items-center bg-[#f1f1f1]">
          <div className="flex h-[21px] items-center">
            <span className="border-x-[5px] border-b-[5px] border-x-transparent border-b-[#505050]" />
          </div>
          <div className="flex-[535]" />
          <div className="h-[61px] w-[17px] bg-[#c1c1c1]" />
          <div className="flex-[254]" />
          <div className="flex h-[21px] items-center">
            <span className="border-x-[5px] border-t-[5px] border-x-transparent border-t-[#505050]" />
          </div>
        </div>
      </div>
      <div className="flex h-[50px] shrink-0 bg-[#010207]">
        <button aria-label="Start" className="flex w-[60px] items-center justify-center">
          <WindowsLogo />
        </button>
        <button aria-label="Cortana" className="flex w-[60px] items-center justify-center">
          <span className="size-5 rounded-full border-[3px] border-white" />
        </button>
        <TaskApps />
        <div className="ml-auto flex items-center pr-px">
          <Clock />
        </div>
      </div>
    </div>
  );
}

export default function App() {
  return (
    <div className={`grid h-screen w-full grid-cols-[3fr_2fr] overflow-hidden bg-black ${UI}`}>
      <LeftScreen />
      <RightScreen />
    </div>
  );
}
